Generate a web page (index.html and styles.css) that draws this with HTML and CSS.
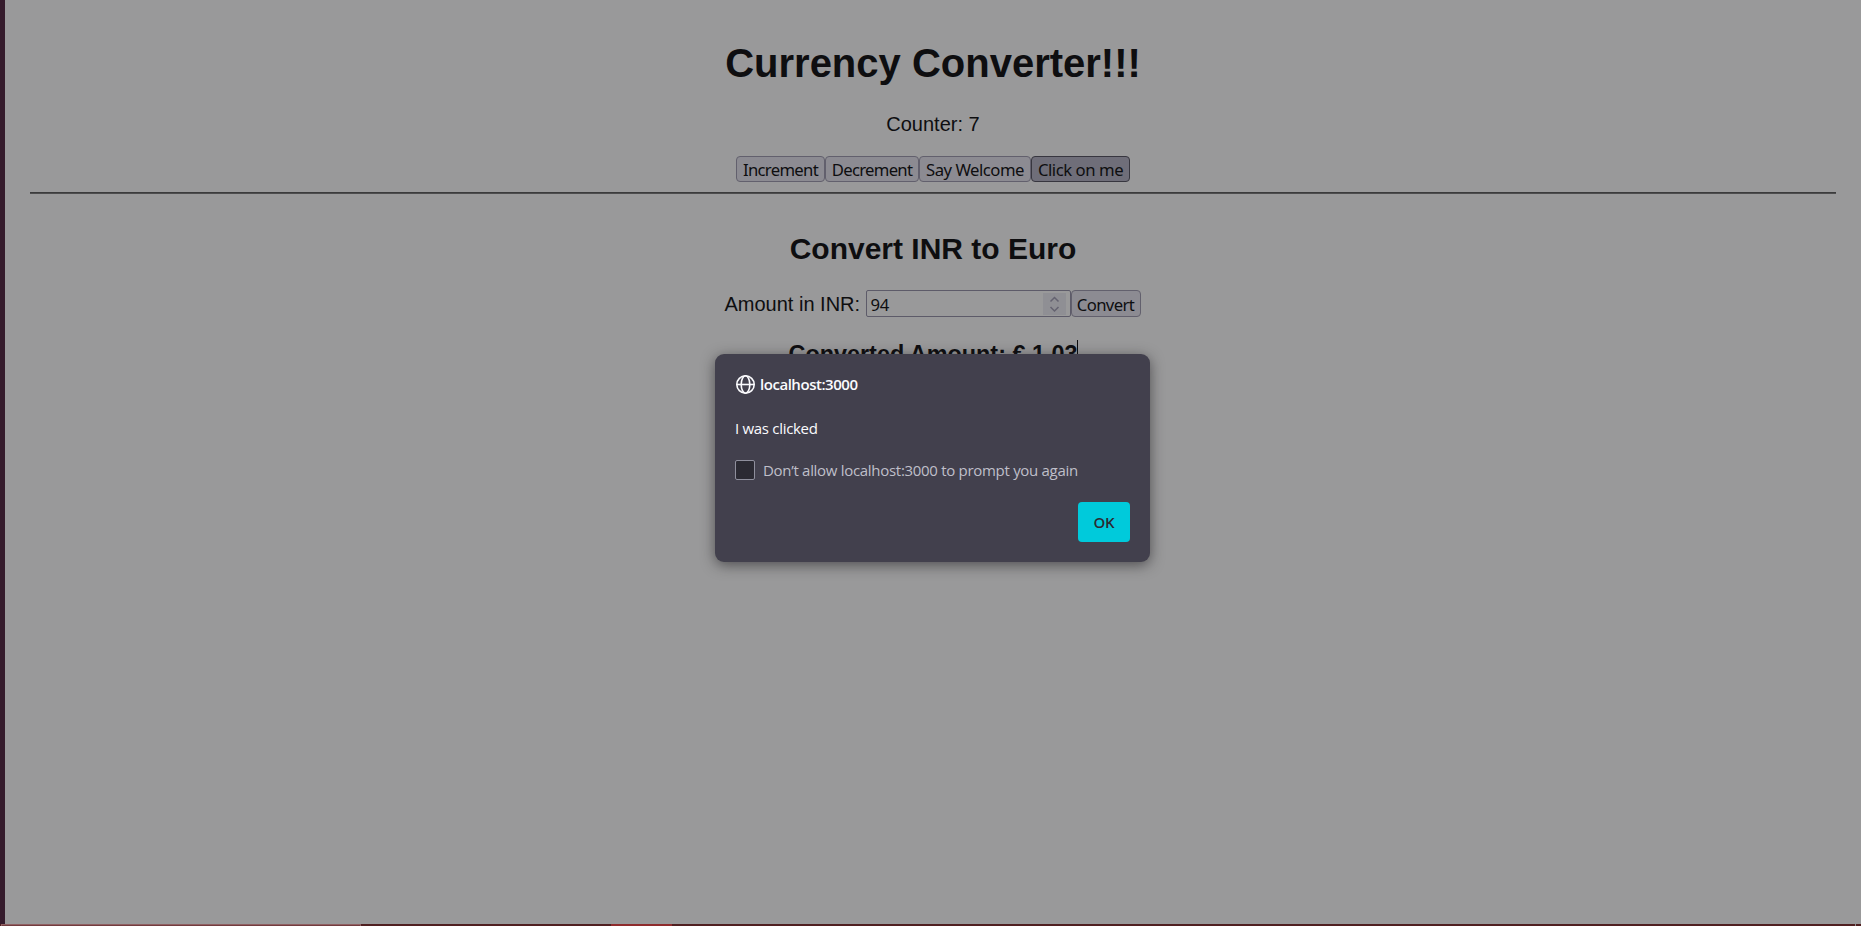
FILE: index.html
```html
<!DOCTYPE html>
<html lang="en">
<head>
<meta charset="utf-8">
<title>Currency Converter</title>
<link rel="stylesheet" href="styles.css">
</head>
<body>
<div class="page">
  <main class="app">
    <h1 class="title">Currency Converter!!!</h1>
    <p class="counter">Counter: 7</p>
    <div class="buttons">
      <button class="btn btn-increment">Increment</button>
      <button class="btn btn-decrement">Decrement</button>
      <button class="btn btn-welcome">Say Welcome</button>
      <button class="btn btn-click">Click on me</button>
    </div>
    <div class="rule"></div>
    <h2 class="subtitle">Convert INR to Euro</h2>
    <div class="form-row">
      <span class="label">Amount in INR:</span>
      <div class="field"><span class="value">94</span>
        <span class="spinner"><svg width="23" height="22" viewBox="0 0 23 22"><path d="M7.5 8.5L11.5 4.5L15.5 8.5M7.5 14L11.5 18L15.5 14" fill="none" stroke="#646270" stroke-width="1.5"/></svg></span>
      </div>
      <button class="btn btn-convert">Convert</button>
    </div>
    <h3 class="result"><span class="result-text">Converted Amount: € 1.03</span><span class="caret"></span></h3>
  </main>
  <footer class="taskbar"><span class="task-light"></span><span class="task-active"></span><span class="task-end"></span></footer>
</div>
<section class="dialog" role="dialog">
  <div class="origin">
    <svg class="globe" width="20" height="20" viewBox="0 0 20 20" fill="none" stroke="#fbfbfe" stroke-width="1.6"><circle cx="9.5" cy="10.5" r="8.7"/><ellipse cx="9.5" cy="10.5" rx="4.3" ry="8.7"/><path d="M.8 10.5H18.2"/></svg>
    <span class="host">localhost:3000</span>
  </div>
  <p class="message"><span class="message-text">I was clicked</span></p>
  <div class="option"><span class="checkbox"></span><span class="option-text">Don’t allow localhost:3000 to prompt you again</span></div>
  <div class="actions"><button class="ok">OK</button></div>
</section>
</body>
</html>
```
FILE: styles.css
```css
* { box-sizing: border-box; }
body { margin: 0; background: #99999a; color: #0e0e10; font-family: "Liberation Sans", Arial, sans-serif; font-size: 20px; overflow: hidden; }
.page { display: flex; flex-direction: column; height: 926px; }
.app { flex: 1; min-height: 0; display: flex; flex-direction: column; align-items: center; border-left: 5px solid #351b2c; padding: 0 25px; }
.title { margin: 40px 0 0; font-size: 40px; line-height: 46px; white-space: nowrap; }
.counter { margin: 26px 0 0; line-height: 24px; }
.buttons { display: flex; gap: 0; margin-top: 20px; }
.btn { height: 26px; padding: 2px 0 0; border: 1px solid #62606d; border-radius: 4px; background: #8c8b92; color: #0e0e10; font: 16.7px/22px "Noto Sans", sans-serif; letter-spacing: -.7px; white-space: nowrap; }
.btn-increment { width: 89px; }
.btn-decrement { width: 94px; }
.btn-welcome { width: 112px; letter-spacing: -.5px; }
.btn-click { width: 99px; letter-spacing: -.45px; background: #6f6e79; border-color: #37363f; }
.rule { align-self: stretch; height: 2px; margin-top: 10px; background: #4d4d4e; border-top: 1px solid #3b3b3c; }
.subtitle { margin: 38px 0 0; font-size: 30px; line-height: 34px; }
.form-row { display: flex; height: 27px; margin: 24px 1px 0 0; }
.label { width: 141px; line-height: 28px; white-space: nowrap; }
.field { display: flex; align-items: center; justify-content: space-between; width: 205px; padding: 0 4px; border: 1px solid #5d5b69; border-radius: 2px; font: 16.7px/25px "Noto Sans", sans-serif; }
.value { padding-top: 2px; letter-spacing: -.3px; }
.spinner { display: flex; background: #8f8f94; }
.form-row .btn { height: 27px; width: 70px; letter-spacing: -.6px; }
.result { display: flex; margin: 24px 0 0 1px; font-size: 23.4px; line-height: 26px; }
.caret { width: 1px; height: 26px; margin: -1px 0 0; background: #0e0e10; }
.taskbar { display: flex; height: 2px; background: #4f1f20; }
.task-light { width: 360px; margin-left: 1px; background: #713c3e; border: 1px solid #8f5f61; border-bottom: 0; }
.task-active { width: 61px; margin-left: 250px; background: #8f2b2c; }
.task-end { width: 1px; margin: 0 5px 0 auto; background: #8d8b8c; }
.dialog { position: absolute; left: 715px; top: 354px; width: 435px; height: 208px; padding: 20px; border-radius: 9px; background: #42404d; color: #fbfbfe; box-shadow: 0 3px 14px rgba(30,28,32,.6); font: 15px/20px "Open Sans", sans-serif; letter-spacing: -.3px; }
.origin { display: flex; height: 20px; align-items: center; gap: 4px; font-weight: 600; letter-spacing: -.46px; }
.globe { margin-left: 1px; }
.message { margin: 24px 0 0; height: 22px; }
.option { display: flex; gap: 8px; margin-top: 20px; color: #bfbfc9; white-space: nowrap; }
.checkbox { width: 20px; height: 20px; border: 1px solid #8f8f9d; border-radius: 2px; background: #2b2a33; }
.actions { display: flex; justify-content: flex-end; margin-top: 22px; }
.ok { width: 52px; height: 40px; padding: 0; border: 0; border-radius: 4px; background: #00cadb; color: #2b2a33; font: 600 15px/40px "Open Sans", sans-serif; letter-spacing: -.3px; }
```
